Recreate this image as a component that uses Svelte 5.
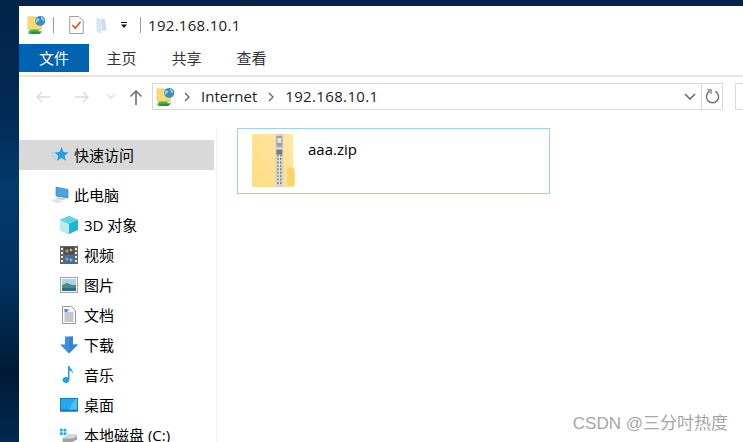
<script>
  const tabs = ['主页', '共享', '查看'];
</script>

<div class="desk">
  <div class="win">
    <div class="title">
      <svg class="ic netico" viewBox="0 0 22 22">
        <path d="M1 2h8l2 2h5v12H1z" fill="#f9d976" stroke="#e8c25a" stroke-width=".6"/>
        <circle cx="14.5" cy="6.5" r="5.5" fill="#3d8cc4"/>
        <path d="M10.500 4c2-1 3 0 3 1.500s-2 1-2.500 2.500-1.500 0-1.300-2zM15 2c2 0 4 2 4 4l-2 .5-1-2z" fill="#8fd0ea"/>
        <path d="M1 19l3-3h10l-2 2h5l-3 3H3z" fill="#43b649"/>
        <path d="M3 21l3-2.500h9L13 21z" fill="#2c8d3a"/>
      </svg>
      <i class="sep"></i>
      <svg class="ic check" viewBox="0 0 16 20">
        <path d="M.5.500h10l5 5v14H.5z" fill="#fff" stroke="#8f8f8f"/>
        <path d="M3.500 10l3 3.500 6-7" fill="none" stroke="#e4572a" stroke-width="1.800"/>
      </svg>
      <svg class="ic fold" viewBox="0 0 14 20">
        <path d="M1 1l6 1v17l-6 -1z" fill="#dbe6f4"/>
        <path d="M7 2h4l2 14H7v3z" fill="#cfdcee"/>
      </svg>
      <svg class="ic drop" viewBox="0 0 8 7">
        <path d="M1 0h6v1H1zM1 2.500h6L4 6z" fill="#111"/>
      </svg>
      <i class="sep two"></i>
      <span class="t">192.168.10.1</span>
    </div>

    <div class="ribbon">
      <div class="file">文件</div>
      {#each tabs as t}
        <div class="tab">{t}</div>
      {/each}
    </div>

    <div class="nav">
      <svg class="arrow" viewBox="0 0 16 14"><path d="M15 7H2M7 2L2 7l5 5" fill="none" stroke="#dcdcdc" stroke-width="1.500"/></svg>
      <svg class="arrow fwd" viewBox="0 0 16 14"><path d="M1 7h13M9 2l5 5-5 5" fill="none" stroke="#dcdcdc" stroke-width="1.500"/></svg>
      <svg class="chev" viewBox="0 0 8 5"><path d="M.5.500L4 4l3.500-3.500" fill="none" stroke="#dcdcdc" stroke-width="1.200"/></svg>
      <svg class="up" viewBox="0 0 14 16"><path d="M7 16V2M1.500 7.500L7 2l5.500 5.500" fill="none" stroke="#777" stroke-width="1.700"/></svg>
      <div class="addr">
        <svg class="ic netico" viewBox="0 0 22 22">
          <path d="M1 2h8l2 2h5v12H1z" fill="#f9d976" stroke="#e8c25a" stroke-width=".6"/>
          <circle cx="14.500" cy="6.500" r="5.500" fill="#3d8cc4"/>
          <path d="M10.500 4c2-1 3 0 3 1.500s-2 1-2.500 2.500-1.500 0-1.300-2zM15 2c2 0 4 2 4 4l-2 .5-1-2z" fill="#8fd0ea"/>
          <path d="M1 19l3-3h10l-2 2h5l-3 3H3z" fill="#43b649"/>
          <path d="M3 21l3-2.500h9L13 21z" fill="#2c8d3a"/>
        </svg>
        <svg class="crumb" viewBox="0 0 6 10"><path d="M1 1l4 4-4 4" fill="none" stroke="#666" stroke-width="1.300"/></svg>
        <span class="seg">Internet</span>
        <svg class="crumb two" viewBox="0 0 6 10"><path d="M1 1l4 4-4 4" fill="none" stroke="#666" stroke-width="1.300"/></svg>
        <span class="seg num">192.168.10.1</span>
        <svg class="down" viewBox="0 0 12 7"><path d="M1 1l5 5 5-5" fill="none" stroke="#666" stroke-width="1.500"/></svg>
        <div class="refresh">
          <svg viewBox="0 0 16 16"><path d="M5 2.400A6.500 6.500 0 1 0 11 2.400" fill="none" stroke="#777" stroke-width="1.600"/><path d="M2.500 1h4v4" fill="none" stroke="#777" stroke-width="1.300"/></svg>
        </div>
      </div>
      <div class="search"></div>
    </div>

    <div class="body">
      <aside>
        <div class="row top sel">
          <svg class="ic star" viewBox="0 0 18 16">
            <path d="M10.500 0l2 5 5 .4-3.800 3.300 1.200 5-4.400-2.700L6 13.700l1.200-5L3.500 5.400l5-.4z" fill="#2a9de6"/>
            <path d="M0 6h4M1 9h4M2 12h3" stroke="#a8cdea" stroke-width="1"/>
          </svg>
          <span>快速访问</span>
        </div>
        <div class="row pc">
          <svg class="ic pcico" viewBox="0 0 20 18">
            <path d="M6 1l12 2.500v8.500L6 10z" fill="#4aa3dc" stroke="#2d7fb8" stroke-width=".6"/>
            <path d="M7 11l9 1.500-2 2-8-1.500z" fill="#cdd2d8"/>
            <path d="M1 14l6-1 6 2.500-6 2z" fill="#dfe2e6"/>
          </svg>
          <span>此电脑</span>
        </div>
        <div class="row sub">
          <svg class="ic cube" viewBox="0 0 18 18">
            <path d="M9 0l9 4v10l-9 4-9-4V4z" fill="#1fb3ce"/>
            <path d="M9 0l9 4-9 4-9-4z" fill="#62d4e6"/>
            <path d="M0 4l9 4v10l-9-4z" fill="#b9ecf1"/>
          </svg>
          <span>3D 对象</span>
        </div>
        <div class="row sub">
          <svg class="ic" viewBox="0 0 18 18">
            <rect width="18" height="18" fill="#666"/>
            <path d="M1 2h2v2H1zM1 6h2v2H1zM1 10h2v2H1zM1 14h2v2H1zM15 2h2v2h-2zM15 6h2v2h-2zM15 10h2v2h-2zM15 14h2v2h-2z" fill="#eee"/>
            <rect x="4" y="1" width="10" height="7.500" fill="#3f4d63"/>
            <rect x="4" y="9.500" width="10" height="7.500" fill="#2d6fc4"/>
            <circle cx="7" cy="5" r="1.800" fill="#d9832f"/><circle cx="11" cy="4" r="1.500" fill="#c4b13e"/>
            <circle cx="7" cy="13" r="1.800" fill="#d9832f"/><circle cx="11" cy="14" r="1.500" fill="#c4b13e"/>
          </svg>
          <span>视频</span>
        </div>
        <div class="row sub">
          <svg class="ic" viewBox="0 0 18 16">
            <rect x=".5" y=".5" width="17" height="15" fill="#fff" stroke="#a3a3a3"/>
            <rect x="2" y="2" width="14" height="12" fill="#a9d4ea"/>
            <path d="M2 8l5-2 5 2 4 0v6H2z" fill="#4e8a83"/>
            <path d="M2 11l14 0v3H2z" fill="#2e6f8f"/>
          </svg>
          <span>图片</span>
        </div>
        <div class="row sub">
          <svg class="ic doc" viewBox="0 0 14 18">
            <path d="M.5.500h9l4 4v13H.5z" fill="#fbfbfb" stroke="#999"/>
            <path d="M2.500 4h5M2.500 7h9M2.500 9h9M2.500 11h9M2.500 13h9M2.500 15h9" stroke="#8a95a3" stroke-width="1"/>
            <rect x="2.500" y="3" width="3" height="3" fill="#3d8fd6"/>
          </svg>
          <span>文档</span>
        </div>
        <div class="row sub">
          <svg class="ic" viewBox="0 0 18 17">
            <path d="M5 0h8v8h5l-9 9-9-9h5z" fill="#3d8fe0"/>
            <path d="M9 0h4v8h5l-9 9z" fill="#2f7ccb" opacity=".6"/>
          </svg>
          <span>下载</span>
        </div>
        <div class="row sub">
          <svg class="ic" viewBox="0 0 18 18">
            <path d="M8 0h1.500c.5 3 4 4 3.500 7.500-.8-2-2.500-2.800-3.500-3V14a3.500 3 0 1 1-1.500-2.500z" fill="#1e9fe8"/>
          </svg>
          <span>音乐</span>
        </div>
        <div class="row sub">
          <svg class="ic" viewBox="0 0 18 14">
            <rect width="18" height="13" fill="#157ac0"/>
            <rect x="1" y="1" width="16" height="10.500" fill="#2aa6f0"/>
            <path d="M9 11.500L15 1h2v10.500z" fill="#53bdf5"/>
            <rect y="13" width="18" height="1" fill="#888"/>
          </svg>
          <span>桌面</span>
        </div>
        <div class="row sub">
          <svg class="ic" viewBox="0 0 20 16">
            <path d="M0 1h3v3H0zM4 1h3v3H4zM0 5h3v3H0zM4 5h3v3H4z" fill="#19aee8"/>
            <path d="M3 11l6-4h10v6l-6 3H3z" fill="#d4d8da"/>
            <path d="M3 12h11l5-3v4l-6 3H3z" fill="#9ea3a5"/>
          </svg>
          <span>本地磁盘 (C:)</span>
        </div>
      </aside>
      <main>
        <div class="item">
          <svg class="zip" viewBox="0 0 44 54">
            <defs>
              <linearGradient id="fg" x1="0" y1="1" x2="1" y2="0">
                <stop offset="0" stop-color="#fddc82"/>
                <stop offset="1" stop-color="#ffe9a6"/>
              </linearGradient>
            </defs>
            <path d="M1 0h40c1 0 1 1 1 1v33l2 2v16c0 1-1 2-2 2H1c-1 0-1-1-1-2V1c0-1 1-1 1-1z" fill="url(#fg)"/>
            <path d="M36 36l3-3 4 3v16c0 1-1 1-2 1h-5z" fill="#fbd26c"/>
            <rect x="24" y="0" width="8" height="54" fill="#d2d2d2"/>
            <rect x="25" y="2" width="6" height="11" fill="#a0a0a0"/>
            <rect x="26" y="4" width="4" height="5" fill="#e5e5e5"/>
            <rect x="25" y="16" width="6" height="5" fill="#7a7a7a"/>
            <path d="M28 21v31" stroke="#777" stroke-width="4" stroke-dasharray="2 1.500"/>
            <path d="M28 21v31" stroke="#e8e2cc" stroke-width="1.500"/>
          </svg>
          <span>aaa.zip</span>
        </div>
      </main>
    </div>
  </div>
  <div class="mark">CSDN @三分吋热度</div>
</div>

<style>
  :global(body) { margin: 0; }
  .desk {
    width: 743px;
    height: 442px;
    position: relative;
    overflow: hidden;
    box-sizing: border-box;
    padding: 6px 0 0 19px;
    background: linear-gradient(180deg, #02234a 0, #022b56 25%, #033a6c 42%, #02315f 65%, #011a36 84%, #02294f 100%);
    font-family: "Open Sans", "Noto Sans CJK SC", sans-serif;
    color: #000;
  }
  .win {
    background: #fff;
    height: 436px;
    display: flex;
    flex-direction: column;
  }
  svg { display: block; flex: none; }
  .title {
    height: 38px;
    flex: none;
    display: flex;
    align-items: center;
    padding-left: 8px;
    box-sizing: border-box;
  }
  .netico { width: 20px; height: 20px; }
  .sep { width: 1px; height: 16px; background: #9a9a9a; margin-left: 6px; }
  .sep.two { margin-left: 12px; }
  .check { width: 15px; height: 18px; margin-left: 15px; }
  .fold { width: 13px; height: 17px; margin-left: 11px; }
  .drop { width: 8px; height: 7px; margin-left: 12px; }
  .t {
    font-size: 15px;
    letter-spacing: .3px;
    margin-left: 7px;
    color: #222;
  }
  .ribbon {
    height: 28px;
    flex: none;
    display: flex;
    font-size: 15px;
    color: #333;
  }
  .file, .tab { padding-bottom: 2px; box-sizing: border-box; }
  .file {
    width: 70px;
    background: #0063b1;
    color: #fff;
    display: flex;
    align-items: center;
    justify-content: center;
  }
  .tab { width: 65px; display: flex; align-items: center; justify-content: center; }
  .nav {
    margin-top: 3px;
    height: 53px;
    flex: none;
    border-top: 2px solid #e6e6e6;
    box-sizing: border-box;
    padding: 6px 0 18px 16px;
    display: flex;
    align-items: center;
  }
  .arrow { width: 16px; height: 14px; }
  .arrow.fwd { margin-left: 23px; }
  .chev { width: 8px; height: 5px; margin-left: 17px; }
  .up { width: 14px; height: 16px; margin-left: 14px; }
  .addr {
    margin-left: 9px;
    width: 571px;
    height: 27px;
    flex: none;
    box-sizing: border-box;
    border: 1px solid #d9d9d9;
    display: flex;
    align-items: center;
    padding-left: 3px;
    font-size: 15px;
    color: #222;
  }
  .seg { margin-bottom: 2px; }
  .num { letter-spacing: .35px; }
  .crumb { width: 6px; height: 10px; margin: 0 11px 0 8px; }
  .crumb.two { margin: 0 11px; }
  .down { width: 12px; height: 7px; margin-left: auto; margin-right: 5px; }
  .refresh {
    width: 20px;
    height: 100%;
    border-left: 1px solid #d9d9d9;
    display: flex;
    align-items: center;
    justify-content: center;
  }
  .refresh svg { width: 15px; height: 15px; }
  .search {
    width: 20px;
    height: 27px;
    margin-left: 12px;
    border: 1px solid #d9d9d9;
    border-right: 0;
    box-sizing: border-box;
    flex: none;
  }
  .body { flex: 1; display: flex; min-height: 0; overflow: hidden; }
  aside {
    width: 197px;
    flex: none;
    border-right: 1px solid #f0f0f0;
    padding-top: 12px;
    font-size: 15px;
  }
  .row {
    height: 30px;
    display: flex;
    align-items: center;
    width: 195px;
    box-sizing: border-box;
  }
  .row span { margin-bottom: 2px; }
  .row .ic { width: 18px; height: 18px; }
  .row.top { padding-left: 32px; margin-bottom: 10px; }
  .row.top span { margin-left: 5px; }
  .row.sel { background: #d9d9d9; }
  .row .star { width: 18px; height: 16px; }
  .row.pc { padding-left: 31px; }
  .row.pc .pcico { width: 20px; height: 18px; }
  .row.pc span { margin-left: 4px; }
  .row.sub { padding-left: 41px; }
  .row.sub span { margin-left: 6px; white-space: nowrap; }
  main { flex: 1; padding: 0 0 0 20px; }
  .item {
    width: 313px;
    height: 66px;
    box-sizing: border-box;
    border: 1px solid #99d1f7;
    display: flex;
    align-items: flex-start;
    padding: 5px 0 0 14px;
    font-size: 15px;
  }
  .zip { width: 43px; height: 53px; }
  .item span { margin-left: 13px; margin-top: 5px; }
  .mark {
    position: absolute;
    right: 15px;
    bottom: 8px;
    font-size: 17px;
    color: #a6a6a6;
    font-family: "Liberation Sans", "Noto Sans CJK SC", sans-serif;
  }
</style>
